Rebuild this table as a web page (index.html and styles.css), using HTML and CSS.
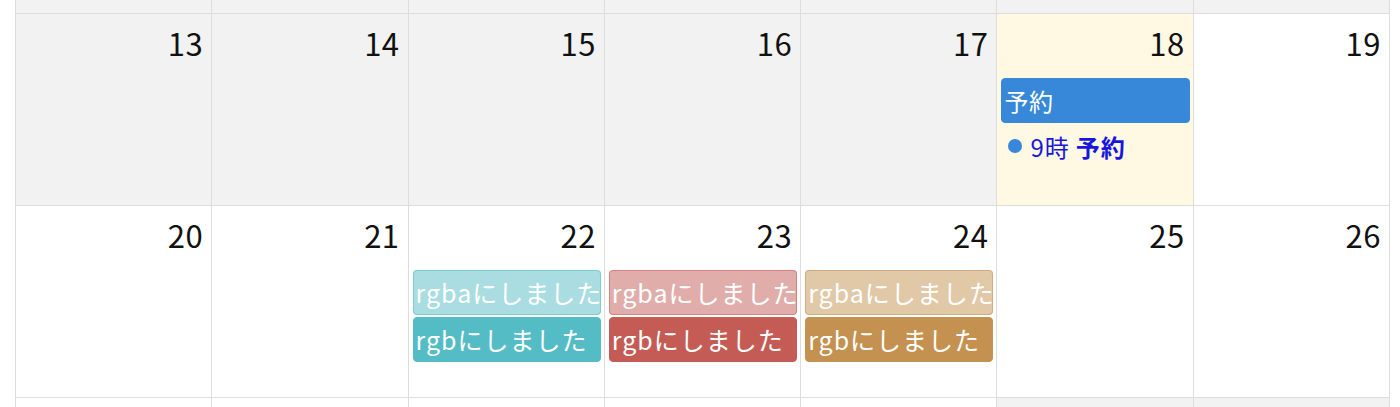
FILE: index.html
```html
<!DOCTYPE html>
<html lang="ja">
<head>
<meta charset="utf-8">
<title>Calendar</title>
<link rel="stylesheet" href="styles.css">
</head>
<body>
<div class="cal">
  <div class="row row-edge-top">
    <div class="cell past"></div><div class="cell past"></div><div class="cell past"></div><div class="cell past"></div><div class="cell past"></div><div class="cell past"></div><div class="cell past"></div>
  </div>
  <div class="row week">
    <div class="cell past"><div class="num">13</div></div>
    <div class="cell past"><div class="num">14</div></div>
    <div class="cell past"><div class="num">15</div></div>
    <div class="cell past"><div class="num">16</div></div>
    <div class="cell past"><div class="num">17</div></div>
    <div class="cell today">
      <div class="num">18</div>
      <div class="events">
        <div class="ev ev-blue">予約</div>
        <div class="dot-ev"><span class="dot"></span><span class="dot-time">9時</span><b class="dot-title">予約</b></div>
      </div>
    </div>
    <div class="cell"><div class="num">19</div></div>
  </div>
  <div class="row week">
    <div class="cell"><div class="num">20</div></div>
    <div class="cell"><div class="num">21</div></div>
    <div class="cell">
      <div class="num">22</div>
      <div class="events">
        <div class="ev ev-teal-a">rgbaにしました</div>
        <div class="ev ev-teal">rgbにしました</div>
      </div>
    </div>
    <div class="cell">
      <div class="num">23</div>
      <div class="events">
        <div class="ev ev-red-a">rgbaにしました</div>
        <div class="ev ev-red">rgbにしました</div>
      </div>
    </div>
    <div class="cell">
      <div class="num">24</div>
      <div class="events">
        <div class="ev ev-tan-a">rgbaにしました</div>
        <div class="ev ev-tan">rgbにしました</div>
      </div>
    </div>
    <div class="cell"><div class="num">25</div></div>
    <div class="cell"><div class="num">26</div></div>
  </div>
  <div class="row row-edge-bottom">
    <div class="cell"></div><div class="cell"></div><div class="cell"></div><div class="cell"></div><div class="cell"></div><div class="cell past"></div><div class="cell past"></div>
  </div>
</div>
</body>
</html>
```
FILE: styles.css
```css
html, body {
  margin: 0;
  padding: 0;
  background: #ffffff;
}
body {
  font-family: "Noto Sans CJK JP", "Noto Sans", sans-serif;
  color: #111111;
  overflow: hidden;
  height: 407px;
}
.cal {
  margin-left: 15px;
  width: 1375px;
  display: flex;
  flex-direction: column;
}
.row {
  display: grid;
  grid-template-columns: repeat(7, 1fr);
  border-right: 1px solid #dddddd;
}
.row-edge-top {
  height: 13px;
}
.week {
  height: 192px;
}
.row-edge-bottom {
  height: 20px;
}
.cell {
  border-left: 1px solid #dddddd;
  border-top: 1px solid #dddddd;
  background: #ffffff;
  min-width: 0;
  box-sizing: border-box;
}
.row-edge-top .cell {
  border-top: none;
}
.cell.past {
  background: #f2f2f2;
}
.cell.today {
  background: #fff9e3;
}
.num {
  text-align: right;
  font-size: 31px;
  font-weight: 400;
  line-height: 36px;
  padding: 11px 8px 0 0;
  height: 53px;
  box-sizing: content-box;
  color: #111111;
  letter-spacing: 0.5px;
}
.events {
  padding: 0 3px 0 4px;
  display: flex;
  flex-direction: column;
  gap: 2px;
}
.ev {
  height: 45px;
  box-sizing: border-box;
  border: 1px solid transparent;
  border-radius: 4px;
  padding: 0 2px;
  font-size: 25px;
  line-height: 43px;
  letter-spacing: 1px;
  color: #ffffff;
  white-space: nowrap;
  overflow: hidden;
}
.ev-blue { background: #3788d8; border-color: #3788d8; font-size: 24px; letter-spacing: 0.5px; }
.ev-teal { background: rgb(84, 188, 197); border-color: rgb(84, 188, 197); }
.ev-teal-a { background: rgba(84, 188, 197, 0.5); border-color: rgba(84, 188, 197, 0.5); }
.ev-red { background: rgb(196, 92, 85); border-color: rgb(196, 92, 85); }
.ev-red-a { background: rgba(196, 92, 85, 0.5); border-color: rgba(196, 92, 85, 0.5); }
.ev-tan { background: rgb(196, 145, 80); border-color: rgb(196, 145, 80); }
.ev-tan-a { background: rgba(196, 145, 80, 0.5); border-color: rgba(196, 145, 80, 0.5); }
.dot-ev {
  display: flex;
  align-items: center;
  height: 42px;
  padding-left: 7px;
  font-size: 24px;
  letter-spacing: 1px;
  color: #1616e0;
  white-space: nowrap;
}
.dot {
  width: 14px;
  height: 14px;
  border-radius: 50%;
  background: #3788d8;
  margin-right: 8px;
  flex: none;
}
.dot-time {
  margin-right: 6px;
}
.dot-title {
  font-weight: 700;
}
```
